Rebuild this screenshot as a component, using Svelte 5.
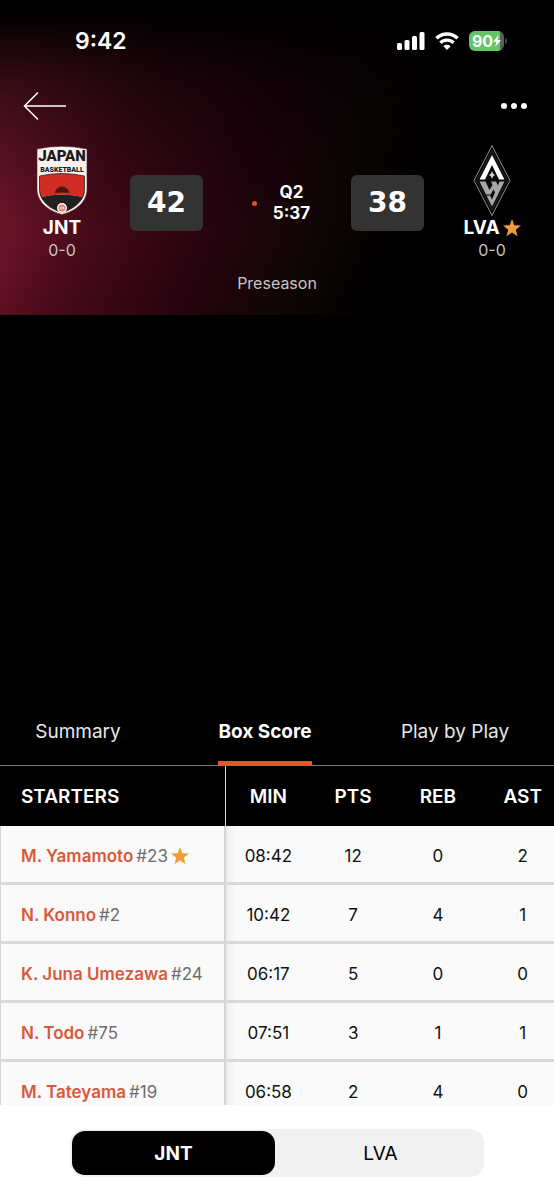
<script>
  const tabs = ['Summary', 'Box Score', 'Play by Play'];
  const columns = ['MIN', 'PTS', 'REB', 'AST'];
  const teams = ['JNT', 'LVA'];

  const players = [
    { name: 'M. Yamamoto',     number: 23, star: true, stats: ['08:42', 12, 0, 2] },
    { name: 'N. Konno',        number: 2,  stats: ['10:42', 7, 4, 1] },
    { name: 'K. Juna Umezawa', number: 24, stats: ['06:17', 5, 0, 0] },
    { name: 'N. Todo',         number: 75, stats: ['07:51', 3, 1, 1] },
    { name: 'M. Tateyama',     number: 19, stats: ['06:58', 2, 4, 0] }
  ];

  let activeTab  = $state('Box Score');
  let activeTeam = $state('JNT');
</script>

{#snippet star()}
  <svg class="star" viewBox="0 0 18 18" aria-hidden="true">
    <path d="M9 0l2.300 6.200 6.700.3-5.200 4.200 1.800 6.600L9 13.600 3.400 17.300l1.800-6.600L0 6.500l6.700-.3z" />
  </svg>
{/snippet}

<div class="screen">
  <header class="hero">
    <div class="status-bar">
      <time class="clock">9:42</time>
      <div class="status-icons">
        <svg width="28" height="18" viewBox="0 0 28 18" fill="#fff" aria-hidden="true">
          <rect x="0" y="11" width="5" height="7" rx="1.5" />
          <rect x="7.5" y="8" width="5" height="10" rx="1.5" />
          <rect x="15" y="4" width="5" height="14" rx="1.5" />
          <rect x="22.5" y="0" width="5" height="18" rx="1.5" />
        </svg>
        <svg width="24" height="18" viewBox="0 0 24 18" aria-hidden="true">
          <g fill="none" stroke="#fff" stroke-width="3.4">
            <path d="M1.4 6.3a15.2 15.2 0 0 1 21.2 0" />
            <path d="M5.4 10.8a9.5 9.5 0 0 1 13.2 0" />
          </g>
          <path fill="#fff" d="M12 18l-3.6-3.7a5.2 5.2 0 0 1 7.2 0z" />
        </svg>
        <div class="battery">
          <span>90</span>
          <svg width="8" height="12" viewBox="0 0 8 12" aria-hidden="true">
            <path fill="#fff" d="M5.6 0L0 6.8h3.3L2.2 12 8 4.9H4.6z" />
          </svg>
        </div>
      </div>
    </div>

    <nav class="top-nav">
      <button aria-label="Back">
        <svg width="44" height="30" viewBox="0 0 44 30" fill="none" stroke="#fff" stroke-width="1.5" aria-hidden="true">
          <path d="M15 1.5L1.5 15 15 28.5M1.5 15H43" />
        </svg>
      </button>
      <button aria-label="More options">
        <svg width="26" height="8" viewBox="0 0 26 8" fill="#fff" aria-hidden="true">
          <circle cx="3" cy="4" r="3" />
          <circle cx="13" cy="4" r="3" />
          <circle cx="23" cy="4" r="3" />
        </svg>
      </button>
    </nav>

    <section class="scoreboard">
      <div class="team">
        <svg width="52" height="72" viewBox="0 0 52 72" aria-hidden="true">
          <path fill="#f7f3f2" stroke="#6b1a22" stroke-width="0.6" d="M1 4Q26 -1.500 51 4V44C51 57 40 66 26 69.500 12 66 1 57 1 44z" />
          <path fill="#d12d24" d="M3.500 31Q26 26 48.500 31V45Q48.500 50 47 52Q26 47 5 52Q3.500 50 3.500 45z" />
          <path fill="#221f1f" d="M5 52Q26 47 47 52C42 61 34 65 26 67.500 18 65 10 61 5 52z" />
          <path fill="none" stroke="#2b1d1d" stroke-width="0.8" d="M3.500 31Q26 26 48.500 31V44C48.500 56 38 64 26 67.500 14 64 3.500 56 3.500 44z" />
          <path fill="#4e1613" d="M19 48a7 6.500 0 0 1 14 0q-7-1.200-14 0z" />
          <circle cx="26" cy="63" r="5" fill="#fff" />
          <circle cx="26" cy="63" r="3.600" fill="#d95b4c" />
          <path stroke="#fff" stroke-width="0.6" fill="none" d="M26 59.500v7M22.500 63h7M23.800 60.500q2 2.500 0 5M28.200 60.500q-2 2.500 0 5" />
          <text class="crest-title" x="26" y="16" text-anchor="middle">JAPAN</text>
          <text class="crest-sub" x="26" y="27" text-anchor="middle">BASKETBALL</text>
        </svg>
        <h2>JNT</h2>
        <p>0-0</p>
      </div>

      <div class="score">42</div>

      <div class="clock-block">
        <i class="live-dot"></i>
        <p>Q2<br />5:37</p>
      </div>

      <div class="score">38</div>

      <div class="team">
        <svg width="40" height="72" viewBox="0 0 40 72" aria-hidden="true">
          <path fill="#090909" stroke="#8c8c8c" stroke-width="1" d="M20 0.500L38 35.500 20 70.500 2 35.500z" />
          <path fill="none" stroke="#303030" stroke-width="0.700" d="M20 6L35 35.500 20 65 5 35.500z" />
          <path fill="#fff" d="M20 10L32.500 34.500H27L20 20 13 34.500H7.500z" />
          <path fill="#d6d6d6" d="M20 26l1 2.500 2 1.500-2 1.500-1 2.500-1-2.500-2-1.500 2-1.500z" />
          <path fill="#a7a8aa" d="M7.500 36.500H13.500L17.500 45 20.500 40 19 36.500H24L26 40.500 27.500 36.500H32.500L20 61.500 14.500 50.500H18L20 54.500 23 47.500 21.500 44.500 18.500 49.500H14z" />
        </svg>
        <h2>LVA {@render star()}</h2>
        <p>0-0</p>
      </div>
    </section>

    <p class="phase">Preseason</p>
  </header>

  <div class="media"></div>

  <nav class="tabs">
    {#each tabs as tab}
      <button class:is-active={activeTab === tab} onclick={() => (activeTab = tab)}>{tab}</button>
    {/each}
  </nav>

  <main class="box-score">
    <table>
      <thead>
        <tr>
          <th class="player" scope="col">STARTERS</th>
          {#each columns as column}
            <th scope="col">{column}</th>
          {/each}
        </tr>
      </thead>
      <tbody>
        {#each players as player}
          <tr>
            <th class="player" scope="row">
              <div class="player-name">
                <a href="#player-{player.number}">{player.name}</a>
                <span class="number">#{player.number}</span>
                {#if player.star}{@render star()}{/if}
              </div>
            </th>
            {#each player.stats as stat}
              <td>{stat}</td>
            {/each}
          </tr>
        {/each}
      </tbody>
    </table>
  </main>

  <footer class="switch-bar">
    <div class="team-switch">
      {#each teams as team}
        <button class:is-active={activeTeam === team} onclick={() => (activeTeam = team)}>{team}</button>
      {/each}
    </div>
  </footer>
</div>

<style>
  :global(body) {
    margin:     0;
    background: #000;
  }

  .screen {
    display:        flex;
    flex-direction: column;
    height:         100vh;
    overflow:       hidden;
    background:     #000;
    color:          #fff;
    font-family:    Inter, 'Liberation Sans', sans-serif;
  }

  h2, p {
    margin: 0;
  }

  button {
    padding:     0;
    border:      0;
    background:  none;
    color:       inherit;
    font-family: inherit;
    cursor:      pointer;
  }

  svg {
    display: block;
  }

  .star {
    width:  18px;
    height: 18px;
    fill:   #f19c38;
  }

  /* Header */
  .hero {
    flex:           none;
    padding-bottom: 21px;
    background:
      linear-gradient(180deg, #000 4%, rgba(0, 0, 0, 0.6) 26%, transparent 75%),
      linear-gradient(114deg, #821a2f 8%, #480a1a 27%, #27030e 45%, #100606 60%, #000 73%);
  }

  .status-bar {
    display:         flex;
    align-items:     center;
    justify-content: space-between;
    height:          82px;
    padding:         0 50px 0 75px;
  }

  .clock {
    font-size:   23px;
    font-weight: 600;
  }

  .status-icons {
    display:     flex;
    align-items: center;
    gap:         10px;
  }

  .battery {
    position:        relative;
    display:         flex;
    align-items:     center;
    justify-content: center;
    width:           35px;
    height:          20px;
    border-radius:   6px;
    background:      linear-gradient(90deg, #65c466 90%, #55605a 90%);
    font-size:       16px;
    font-weight:     700;
  }

  .battery::after {
    content:       '';
    position:      absolute;
    right:         -3px;
    width:         2px;
    height:        6px;
    border-radius: 0 2px 2px 0;
    background:    #444;
  }

  .top-nav {
    display:         flex;
    align-items:     center;
    justify-content: space-between;
    height:          48px;
    padding:         0 27px 0 23px;
  }

  .scoreboard {
    display:               grid;
    grid-template-columns: 124px 73px 1fr 73px 124px;
    gap:                   6px;
    align-items:           center;
    padding-top:           15px;
  }

  .team {
    display:        flex;
    flex-direction: column;
    align-items:    center;
  }

  .team h2 {
    display:     flex;
    align-items: center;
    gap:         3px;
    font-size:   19px;
    font-weight: 700;
    line-height: 22px;
  }

  .team p,
  .phase {
    color:       #c9c3c5;
    font-size:   16px;
    line-height: 22px;
  }

  .crest-title,
  .crest-sub {
    fill:        #1d1a1a;
    font-family: Roboto, sans-serif;
    font-weight: 900;
  }

  .crest-title {
    font-size: 15px;
  }

  .crest-sub {
    font-size: 7px;
  }

  .score {
    border-radius: 6px;
    background:    #333;
    font-family:   'DejaVu Sans', sans-serif;
    font-size:     28px;
    font-weight:   700;
    line-height:   56px;
    text-align:    center;
  }

  .clock-block {
    display:         flex;
    align-items:     center;
    justify-content: center;
    gap:             16px;
    padding-left:    8px;
    font-size:       17px;
    font-weight:     700;
    line-height:     21px;
    text-align:      center;
  }

  .live-dot {
    width:         5px;
    height:        5px;
    border-radius: 50%;
    background:    #dc5530;
  }

  .phase {
    margin-top: 11px;
    text-align: center;
  }

  .media {
    flex:   none;
    height: 32vh;
  }

  /* Tabs */
  .tabs {
    display:               grid;
    grid-template-columns: 156fr 218fr 162fr;
    flex:                  none;
    justify-items:         center;
    height:                66px;
    padding-right:         18px;
    border-bottom:         1px solid #777;
  }

  .tabs button {
    position:    relative;
    color:       #e8e8e8;
    font-size:   19px;
    line-height: 64px;
  }

  .tabs .is-active {
    color:       #fff;
    font-weight: 700;
  }

  .tabs .is-active::after {
    content:    '';
    position:   absolute;
    right:      0;
    bottom:     -1px;
    left:       0;
    height:     5px;
    background: #e6552b;
  }

  /* Box score */
  .box-score {
    flex:       1;
    min-height: 0;
    overflow:   hidden;
    background: #fafafa;
  }

  table {
    width:           102%;
    min-width:       565px;
    table-layout:    fixed;
    border-collapse: separate;
    border-spacing:  0;
  }

  th, td {
    box-sizing:     border-box;
    height:         59px;
    padding:        0;
    vertical-align: middle;
    text-align:     center;
  }

  thead th {
    height:      60px;
    background:  #000;
    font-size:   19px;
    font-weight: 600;
  }

  .player {
    width:        226px;
    padding-left: 21px;
    border-right: 2px solid #d4d4d4;
    text-align:   left;
    white-space:  nowrap;
  }

  thead .player {
    border-right: 1px solid #ddd;
  }

  tbody th,
  tbody td {
    padding-top:   3px;
    border-bottom: 3px solid #d9d9d9;
    background:    #fafafa;
    color:         #111;
    font-size:     17px;
    font-weight:   400;
  }

  tbody .player {
    padding-left: 20px;
    border-left:  1px solid #d4d4d4;
  }

  tbody .player + td {
    background: linear-gradient(90deg, #ececec, #fafafa 10px);
  }

  .player-name {
    display:     flex;
    align-items: center;
    gap:         3px;
  }

  .player a {
    color:           #d9593a;
    font-weight:     600;
    text-decoration: none;
  }

  .number {
    color: #6e6e6e;
  }

  /* Team switch */
  .switch-bar {
    flex:       none;
    padding:    24px 70px 23px;
    background: #fff;
  }

  .team-switch {
    display:               grid;
    grid-template-columns: 1fr 1fr;
    gap:                   4px;
    padding:               2px;
    border-radius:         14px;
    background:            #f1f1f1;
  }

  .team-switch button {
    height:        44px;
    border-radius: 13px;
    color:         #000;
    font-size:     19px;
  }

  .team-switch .is-active {
    background:  #000;
    color:       #fff;
    font-weight: 700;
  }
</style>
